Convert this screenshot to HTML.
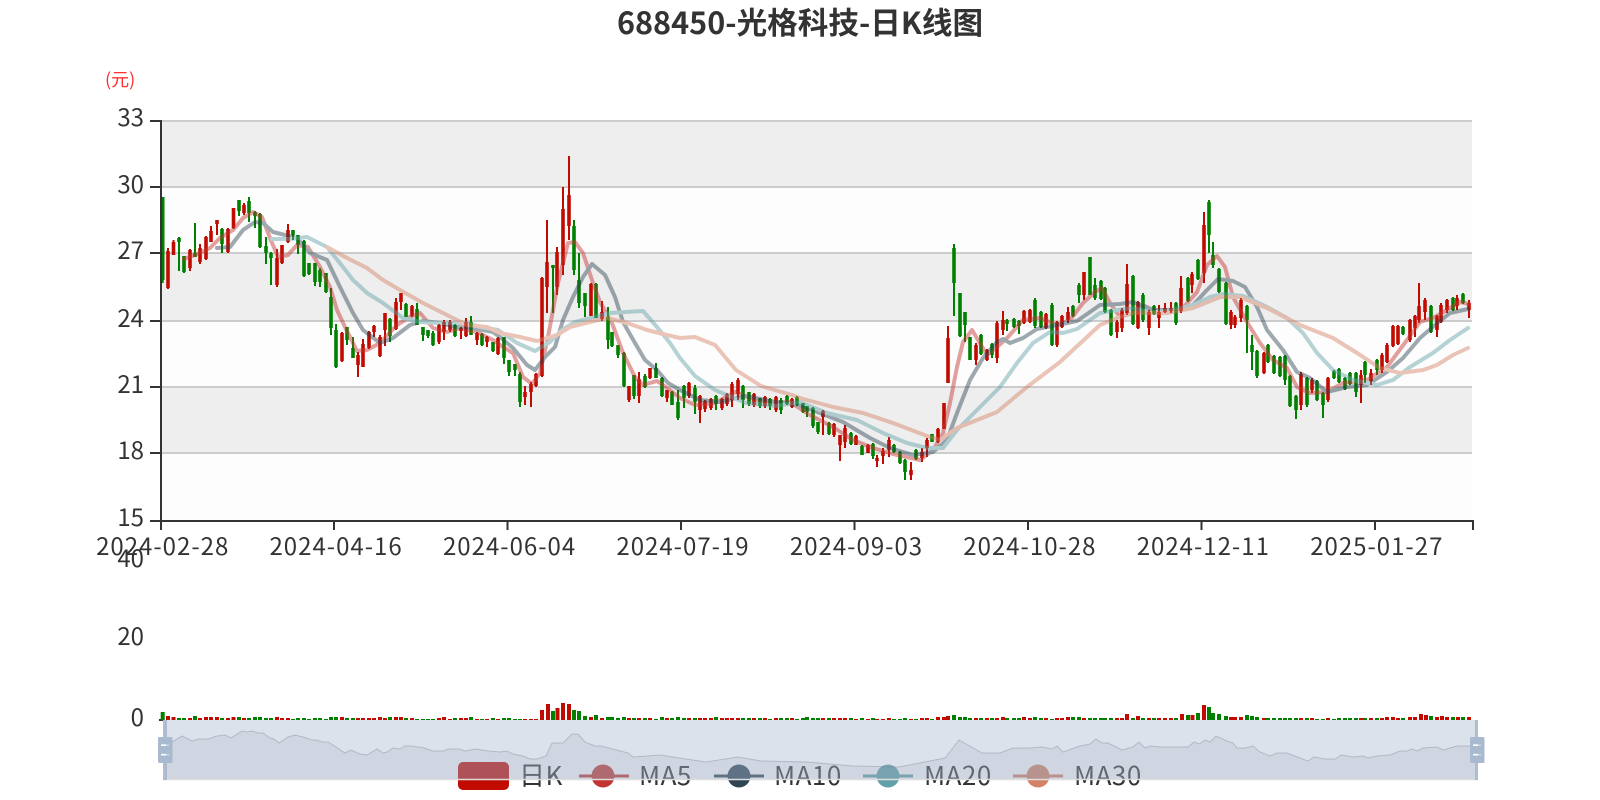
<!DOCTYPE html>
<html lang="zh">
<head>
<meta charset="utf-8">
<title>688450-光格科技-日K线图</title>
<style>
html,body{margin:0;padding:0;background:#fff;width:1600px;height:800px;overflow:hidden}
svg{display:block}
text{font-family:"Noto Sans CJK SC","Liberation Sans",sans-serif;fill:#333;font-size:24px}
.r{text-anchor:end}
.c{text-anchor:middle}
.d{letter-spacing:1px}
.l{font-size:26px;letter-spacing:.5px}
path{fill:none}
</style>
</head>
<body>
<svg width="1600" height="800" viewBox="0 0 1600 800" xmlns="http://www.w3.org/2000/svg">
<rect width="1600" height="800" fill="#fff"/>
<text x="800" y="34" class="c" style="font-size:30.6px;font-weight:700">688450-光格科技-日K线图</text>
<text x="105" y="86" style="font-size:18px;fill:#ff3030">(元)</text>

<!-- bands -->
<rect x="160" y="120" width="1312" height="66.67" fill="#eee"/>
<rect x="160" y="186.67" width="1312" height="66.67" fill="#fdfdfd"/>
<rect x="160" y="253.33" width="1312" height="66.67" fill="#eee"/>
<rect x="160" y="320" width="1312" height="66.67" fill="#fdfdfd"/>
<rect x="160" y="386.67" width="1312" height="66.67" fill="#eee"/>
<rect x="160" y="453.33" width="1312" height="66.67" fill="#fdfdfd"/>
<path d="M160 121H1472M160 187H1472M160 253H1472M160 321H1472M160 387H1472M160 453H1472" stroke="#ccc" stroke-width="2"/>

<!-- green wicks -->
<path stroke="#008000" stroke-width="2" d="M162.7 197V283M179 237V271M184 256V273M195 223V257M222 228V253M239 200V216M249 197V222M255 211V228M260 213V248M266 237V264M271 252V285M293 230V240M298 235V254M304 240V277M309 263V275M315 263V286M320 268V287M326 273V293M331 288V335M336 324V368M347 327V345M353 337V358M390 318V342M406 303V317M417 303V325M423 327V341M428 330V338M433 331V346M455 324V337M471 316V335M482 333V346M493 342V352M504 337V364M509 360V376M515 364V376M520 372V407M553 265V313M574 220V275M579 253V308M585 293V317M596 283V318M608 307V349M612 332V347M618 345V358M624 352V387M634 375V399M645 374V388M656 363V378M662 377V397M672 391V405M678 390V420M684 385V408M695 385V414M716 395V410M743 385V408M749 392V406M760 398V408M770 398V410M781 398V414M787 395V405M797 396V406M803 403V413M807 406V417M813 407V428M818 422V434M829 422V435M851 432V445M862 445V455M873 443V459M894 444V453M900 451V464M905 459V480M916 449V460M932 434V442M954 244V316M960 293V337M965 312V342M970 337V360M981 334V355M992 343V358M1007 319V331M1014 318V328M1019 320V334M1035 298V328M1041 311V328M1052 303V346M1073 305V317M1079 283V303M1090 257V295M1095 278V300M1101 280V300M1105 287V313M1111 309V336M1133 275V325M1143 293V322M1154 305V315M1176 302V325M1188 277V302M1198 259V280M1209 200V253M1213 242V268M1219 268V293M1226 282V325M1247 305V353M1252 335V370M1257 350V378M1268 344V363M1274 355V374M1280 356V377M1285 355V385M1290 375V407M1296 395V419M1307 377V407M1317 380V401M1323 392V418M1334 370V379M1339 368V383M1345 377V390M1350 372V385M1356 372V397M1365 361V383M1377 359V375M1403 326V335M1431 305V333M1453 297V311M1463 293V304"/>
<!-- green bodies -->
<path stroke="#008000" stroke-width="3.6" d="M162.7 197V280M179 238V242M184 256V272M195 253V257M222 229V244M239 200V211M249 201V213M255 212V216M260 214V247M266 246V253M271 253V258M293 230V235M298 235V245M304 241V276M309 263V274M315 263V282M320 270V282M326 273V292M331 297V328M336 330V367M347 327V340M353 348V358M390 319V336M406 304V317M417 309V325M423 327V335M428 330V336M433 333V345M455 325V336M471 322V335M482 334V345M493 342V351M504 337V358M509 360V372M515 364V370M520 374V402M553 265V268M574 226V270M579 280V303M585 293V306M596 284V318M608 317V340M612 332V346M618 345V355M624 353V386M634 375V396M645 376V387M656 368V378M662 378V396M672 392V405M678 402V418M684 386V398M695 388V402M716 396V404M743 386V400M749 392V404M760 398V406M770 399V406M781 400V410M787 396V404M797 397V405M803 403V412M807 406V412M813 408V426M818 422V432M829 423V434M851 433V444M862 446V455M873 444V456M894 445V452M900 452V463M905 460V472M916 450V459M932 434V442M954 248V283M960 293V336M965 312V325M970 337V360M981 335V354M992 344V355M1007 320V324M1014 319V327M1019 321V326M1035 300V326M1041 312V327M1052 305V345M1073 306V316M1079 285V295M1090 257V295M1095 285V298M1101 281V299M1105 288V312M1111 310V335M1133 276V324M1143 295V320M1154 306V314M1176 303V323M1188 278V301M1198 260V279M1209 202V235M1213 255V265M1219 269V292M1226 283V324M1247 306V320M1252 345V352M1257 351V376M1268 345V362M1274 356V373M1280 357V376M1285 356V380M1290 376V406M1296 396V410M1307 378V405M1317 381V400M1323 393V405M1334 371V378M1339 369V382M1345 378V389M1350 373V384M1356 373V392M1365 362V375M1377 360V370M1403 327V334M1431 306V332M1453 298V310M1463 294V303"/>
<!-- red wicks -->
<path stroke="#c10b00" stroke-width="2" d="M168 248V289M173.5 240V255M190 249V271M200 244V264M206 236V260M211 226V242M217 220V235M228 228V253M233.5 208V229M244 203V215M277 249V287M282 245V264M288 224V243M342 332V362M358 352V377M363 339V367M369 331V349M374 325V337M380 335V357M385 313V346M396 298V330M401 293V310M412 305V317M439 324V344M444 320V340M450 320V332M461 327V339M466 318V337M477 332V345M487 336V347M498 337V355M525 386V405M531 382V407M536 373V387M542 277V377M547 220V313M557 247V295M563 187V275M569 156V240M591 283V316M602 301V321M629 386V402M639 372V403M650 368V379M667 390V402M689 382V398M700 395V423M705 400V412M711 398V410M722 398V410M727 393V406M732 382V407M738 378V400M754 393V407M765 396V408M776 396V412M792 398V408M823 410V435M834 423V437M840 435V461M845 425V448M856 435V445M868 444V453M877 455V467M883 448V464M889 437V457M911 462V480M922 448V462M927 438V457M938 428V443M944 403V429M948 326V383M976 343V365M987 349V361M997 321V363M1003 311V335M1024 310V324M1030 309V323M1046 313V329M1057 321V347M1062 315V328M1068 307V323M1084 272V300M1117 320V338M1122 308V332M1127 264V315M1138 301V329M1149 310V335M1159 305V328M1165 303V313M1171 302V313M1181 276V313M1192 272V293M1204 212V283M1231 310V329M1235 315V328M1241 298V322M1264 352V374M1301 372V410M1312 378V393M1328 377V402M1361 370V403M1371 369V385M1382 353V373M1387 343V363M1393 325V347M1398 325V345M1410 319V342M1415 315V337M1419 283V323M1425 298V320M1437 315V337M1441 303V323M1447 299V313M1457 295V310M1469 300V318"/>
<!-- red bodies -->
<path stroke="#c10b00" stroke-width="3.6" d="M168 251V288M173.5 242V255M190 250V268M200 248V262M206 237V259M211 231V242M217 220V224M228 229V252M233.5 208V228M244 205V213M277 258V285M282 245V263M288 230V242M342 333V361M358 355V365M363 344V367M369 332V348M374 326V332M380 337V356M385 313V330M396 302V329M401 293V302M412 306V316M439 325V342M444 322V332M450 322V330M461 328V331M466 322V336M477 333V340M487 337V342M498 338V354M525 392V397M531 384V392M536 374V386M542 278V376M547 262V287M557 252V287M563 209V265M569 195V226M591 284V316M602 312V319M629 386V400M639 379V396M650 368V378M667 390V398M689 383V396M700 396V410M705 401V409M711 399V408M722 399V408M727 394V404M732 384V400M738 380V394M754 394V405M765 397V406M776 397V410M792 399V407M823 411V417M834 424V435M840 435V445M845 428V442M856 436V445M868 445V453M877 458V461M883 451V456M889 440V450M911 470V475M922 452V458M927 440V448M938 429V442M944 403V429M948 338V383M976 345V360M987 350V360M997 323V358M1003 320V330M1024 311V323M1030 310V322M1046 314V328M1057 322V345M1062 316V327M1068 312V320M1084 272V295M1117 322V332M1122 310V328M1127 284V313M1138 302V328M1149 312V328M1159 312V318M1165 308V312M1171 308V311M1181 288V311M1192 274V285M1204 225V273M1231 312V325M1235 317V325M1241 300V318M1264 353V373M1301 374V405M1312 380V390M1328 378V400M1361 375V385M1371 373V381M1382 355V370M1387 345V362M1393 326V346M1398 326V344M1410 320V340M1415 316V328M1419 306V320M1425 300V312M1437 316V330M1441 305V322M1447 300V310M1457 298V306M1469 303V310"/>

<!-- MA lines -->
<g stroke-width="4" stroke-linejoin="round" stroke-linecap="round" opacity=".46">
<path stroke="#c23531" d="M184 259L195 255L210 248L220 238L233 230L243 218L253 212L262 217L270 238L278 257L288 255L297 245L308 247L320 267L330 287L337 310L345 327L357 351L367 350L380 343L397 325L410 317L420 313L433 328L447 332L460 328L477 332L493 340L503 347L513 353L523 377L532 384L540 373L548 337L558 283L568 243L575 242L583 253L592 280L600 302L612 323L623 353L635 377L643 385L657 381L670 390L680 398L695 405L715 403L735 392L750 398L770 403L790 402L810 415L833 427L853 440L873 448L893 454L920 460L933 450L943 433L950 403L957 367L963 342L972 330L978 340L987 355L997 347L1008 337L1023 320L1040 318L1057 325L1070 320L1083 303L1095 292L1102 288L1110 303L1120 317L1133 313L1143 305L1157 312L1170 310L1183 308L1197 292L1207 265L1217 256L1225 267L1233 297L1247 322L1260 343L1273 360L1287 368L1297 387L1310 393L1327 392L1343 383L1367 380L1387 367L1407 340L1420 322L1433 318L1447 310L1460 302L1469 304"/>
<path stroke="#2f4554" d="M217 248L230 247L243 230L255 222L263 223L273 232L297 238L310 253L327 260L340 287L353 313L363 330L380 343L393 338L410 325L423 321L440 323L457 327L473 328L493 332L500 337L513 348L527 365L535 370L545 357L555 347L563 320L573 297L583 277L592 264L605 275L615 297L623 322L635 343L645 360L657 370L668 383L680 390L700 400L720 402L745 396L770 401L790 404L800 405L820 413L843 422L870 438L890 448L913 455L933 452L947 440L957 413L970 380L983 358L997 342L1003 339L1010 343L1023 338L1037 329L1057 325L1077 321L1090 312L1100 305L1120 304L1133 302L1153 310L1173 310L1193 305L1207 290L1218 279L1233 281L1245 287L1257 307L1267 330L1283 350L1297 372L1310 378L1327 392L1347 387L1367 385L1387 372L1403 358L1420 338L1435 325L1450 313L1468 309"/>
<path stroke="#61a0a8" d="M272 239L290 239L307 237L327 247L343 267L353 280L367 293L383 303L403 318L420 322L440 323L467 323L480 327L498 330L517 343L535 351L550 342L562 330L575 322L590 318L610 313L643 311L657 327L670 343L680 358L695 376L715 390L746 403L776 406L800 402L827 413L857 420L883 433L907 443L927 448L943 448L957 430L977 410L1000 387L1017 363L1033 343L1050 332L1063 333L1077 329L1100 313L1117 310L1133 308L1150 313L1173 310L1193 305L1210 297L1223 294L1243 296L1267 307L1287 318L1303 333L1317 353L1333 370L1353 380L1377 385L1393 380L1410 367L1433 353L1450 340L1468 328"/>
<path stroke="#d48265" d="M327 247L347 258L367 268L383 280L400 290L423 303L447 315L467 325L487 327L500 333L520 337L537 341L557 335L570 327L590 322L607 318L627 323L647 330L667 335L680 338L695 337L715 345L736 370L761 386L792 395L800 398L833 407L863 413L893 423L927 436L940 440L957 428L997 412L1027 387L1060 362L1100 325L1117 318L1133 313L1167 313L1193 308L1220 297L1240 297L1267 308L1300 325L1333 338L1357 353L1380 368L1400 373L1423 370L1437 365L1453 355L1468 348"/>
</g>

<!-- axes -->
<path stroke="#333" stroke-width="2" d="M161 120V522M150 121H161M150 187H161M150 253H161M150 321H161M150 387H161M150 453H161M150 521H161M160 521H1474M161 521V530M334 521V530M507.5 521V530M681 521V530M854.5 521V530M1028 521V530M1201.5 521V530M1375 521V530M1473 521V530M159 720H163"/>
<g>
<text x="144" y="126" class="r">33</text>
<text x="144" y="193" class="r">30</text>
<text x="144" y="259" class="r">27</text>
<text x="144" y="327" class="r">24</text>
<text x="144" y="393" class="r">21</text>
<text x="144" y="459" class="r">18</text>
<text x="144" y="526" class="r">15</text>
<text x="162.7" y="555" class="c d">2024-02-28</text>
<text x="336.1" y="555" class="c d">2024-04-16</text>
<text x="509.6" y="555" class="c d">2024-06-04</text>
<text x="683" y="555" class="c d">2024-07-19</text>
<text x="856.5" y="555" class="c d">2024-09-03</text>
<text x="1029.9" y="555" class="c d">2024-10-28</text>
<text x="1203.3" y="555" class="c d">2024-12-11</text>
<text x="1376.8" y="555" class="c d">2025-01-27</text>
<text x="144" y="567" class="r">40</text>
<text x="144" y="645" class="r">20</text>
<text x="144" y="726" class="r">0</text>
</g>

<!-- volume -->
<path stroke="#008000" stroke-width="4" d="M162.7 720v-8M179 720v-2M184 720v-2M195 720v-4M222 720v-2M239 720v-3M249 720v-2M255 720v-3M260 720v-3M266 720v-2M271 720v-2M293 720v-1M298 720v-2M304 720v-2M309 720v-1M315 720v-2M320 720v-2M326 720v-1M331 720v-3M336 720v-3M347 720v-2M353 720v-2M390 720v-3M406 720v-2M417 720v-1M423 720v-1M428 720v-1M433 720v-1M455 720v-2M471 720v-3M482 720v-1M493 720v-2M504 720v-2M509 720v-2M515 720v-1M520 720v-1M553 720v-9M574 720v-10M579 720v-9M585 720v-4M596 720v-5M608 720v-3M612 720v-3M618 720v-2M624 720v-3M634 720v-2M645 720v-2M656 720v-1M662 720v-3M672 720v-2M678 720v-3M684 720v-2M695 720v-2M716 720v-3M743 720v-2M749 720v-2M760 720v-2M770 720v-1M781 720v-2M787 720v-2M797 720v-1M803 720v-2M807 720v-3M813 720v-2M818 720v-2M829 720v-2M851 720v-2M862 720v-2M873 720v-2M894 720v-1M900 720v-1M905 720v-2M916 720v-1M932 720v-1M954 720v-5M960 720v-3M965 720v-3M970 720v-2M981 720v-2M992 720v-2M1007 720v-2M1014 720v-2M1019 720v-2M1035 720v-3M1041 720v-2M1052 720v-1M1073 720v-3M1079 720v-3M1090 720v-2M1095 720v-2M1101 720v-2M1105 720v-2M1111 720v-2M1133 720v-2M1143 720v-2M1154 720v-2M1176 720v-2M1188 720v-5M1198 720v-7M1209 720v-13M1213 720v-7M1219 720v-6M1226 720v-4M1247 720v-5M1252 720v-4M1257 720v-3M1268 720v-2M1274 720v-2M1280 720v-2M1285 720v-2M1290 720v-2M1296 720v-2M1307 720v-2M1317 720v-1M1323 720v-1M1334 720v-1M1339 720v-2M1345 720v-2M1350 720v-2M1356 720v-2M1365 720v-2M1377 720v-2M1403 720v-2M1431 720v-4M1453 720v-3M1463 720v-3"/>
<path stroke="#c10b00" stroke-width="4" d="M168 720v-4M173.5 720v-3M190 720v-2M200 720v-2M206 720v-3M211 720v-3M217 720v-3M228 720v-2M233.5 720v-3M244 720v-2M277 720v-3M282 720v-2M288 720v-2M342 720v-3M358 720v-2M363 720v-2M369 720v-2M374 720v-2M380 720v-3M385 720v-2M396 720v-3M401 720v-3M412 720v-2M439 720v-2M444 720v-3M450 720v-1M461 720v-2M466 720v-2M477 720v-1M487 720v-1M498 720v-1M525 720v-1M531 720v-1M536 720v-1M542 720v-10M548 720v-16M557.5 720v-12M563 720v-17M569 720v-16M591 720v-3M602 720v-2M629 720v-2M639 720v-2M650 720v-2M667 720v-2M689 720v-2M700 720v-2M705 720v-2M711 720v-2M722 720v-2M727 720v-2M732 720v-2M738 720v-2M754 720v-2M765 720v-2M776 720v-2M792 720v-2M823 720v-2M834 720v-2M840 720v-2M845 720v-2M856 720v-1M868 720v-1M877 720v-1M883 720v-1M889 720v-2M911 720v-1M922 720v-2M927 720v-2M938 720v-3M944 720v-3M948 720v-4M976 720v-2M987 720v-2M997 720v-2M1003 720v-3M1024 720v-3M1030 720v-2M1046 720v-2M1057 720v-2M1062 720v-2M1068 720v-3M1084 720v-2M1117 720v-2M1122 720v-2M1127 720v-6M1138 720v-4M1149 720v-2M1159 720v-2M1165 720v-2M1171 720v-2M1182 720v-6M1192.5 720v-5M1204 720v-15M1231 720v-3M1235 720v-3M1241 720v-3M1264 720v-2M1301 720v-2M1312 720v-2M1328 720v-2M1361 720v-2M1371 720v-2M1382 720v-2M1387 720v-3M1393 720v-3M1398 720v-2M1410 720v-3M1415 720v-3M1421 720v-6M1426 720v-5M1437 720v-3M1442 720v-4M1447 720v-3M1458 720v-3M1469 720v-3"/>

<!-- legend (below slider overlay) -->
<rect x="458" y="762" width="51" height="28" rx="5" fill="#c10b00"/>
<text x="519" y="785" class="l">日K</text>
<path stroke="#c23531" stroke-width="3" d="M579 776H629"/><circle cx="603" cy="776" r="11.5" fill="#c23531"/>
<text x="639" y="785" class="l">MA5</text>
<path stroke="#2f4554" stroke-width="3" d="M714 776H764"/><circle cx="739" cy="776" r="11.5" fill="#2f4554"/>
<text x="774" y="785" class="l">MA10</text>
<path stroke="#61a0a8" stroke-width="3" d="M863 776H913"/><circle cx="888" cy="776" r="11.5" fill="#61a0a8"/>
<text x="924" y="785" class="l">MA20</text>
<path stroke="#d48265" stroke-width="3" d="M1013 776H1063"/><circle cx="1038" cy="776" r="11.5" fill="#d48265"/>
<text x="1074" y="785" class="l">MA30</text>

<!-- data zoom -->
<polygon fill="#2f4554" fill-opacity=".1" points="165,780 165,745 172,742 182,736 192,741 198,739 208,739 217,736 225,735 231,738 242,731 247,732 252,731 258,733 263,733 270,738 274,739 279,743 288,737 295,735 303,737 312,740 317,740 322,742 328,742 333,745 345,753 351,750 360,754 367,755 377,749 383,753 387,752 393,748 400,749 405,746 412,746 417,747 421,747 427,749 433,751 443,751 448,749 460,749 465,751 475,749 482,750 488,751 500,752 507,751 513,754 523,756 530,759 537,759 546,756 552,743 563,743 572,734 578,734 585,742 595,746 601,746 628,753 633,757 660,755 679,758 706,762 738,757 761,761 807,762 853,766 899,767 945,758 959,740 968,745 982,753 1000,753 1013,748 1030,748 1042,747 1052,749 1057,746 1063,752 1080,746 1090,744 1096,739 1102,743 1108,743 1122,750 1133,747 1139,742 1145,748 1150,746 1160,747 1188,747 1194,742 1199,744 1205,740 1210,742 1216,736 1227,741 1233,743 1237,748 1245,748 1253,746 1260,752 1270,756 1277,753 1287,753 1297,757 1308,761 1314,757 1325,759 1335,759 1341,755 1353,757 1363,756 1368,758 1377,756 1390,755 1400,751 1407,751 1412,749 1417,751 1423,748 1437,747 1443,750 1450,748 1457,746 1470,746 1476,746 1476,780"/>
<polyline fill="none" stroke="#2f4554" stroke-opacity=".32" stroke-width="1" points="165,745 172,742 182,736 192,741 198,739 208,739 217,736 225,735 231,738 242,731 247,732 252,731 258,733 263,733 270,738 274,739 279,743 288,737 295,735 303,737 312,740 317,740 322,742 328,742 333,745 345,753 351,750 360,754 367,755 377,749 383,753 387,752 393,748 400,749 405,746 412,746 417,747 421,747 427,749 433,751 443,751 448,749 460,749 465,751 475,749 482,750 488,751 500,752 507,751 513,754 523,756 530,759 537,759 546,756 552,743 563,743 572,734 578,734 585,742 595,746 601,746 628,753 633,757 660,755 679,758 706,762 738,757 761,761 807,762 853,766 899,767 945,758 959,740 968,745 982,753 1000,753 1013,748 1030,748 1042,747 1052,749 1057,746 1063,752 1080,746 1090,744 1096,739 1102,743 1108,743 1122,750 1133,747 1139,742 1145,748 1150,746 1160,747 1188,747 1194,742 1199,744 1205,740 1210,742 1216,736 1227,741 1233,743 1237,748 1245,748 1253,746 1260,752 1270,756 1277,753 1287,753 1297,757 1308,761 1314,757 1325,759 1335,759 1341,755 1353,757 1363,756 1368,758 1377,756 1390,755 1400,751 1407,751 1412,749 1417,751 1423,748 1437,747 1443,750 1450,748 1457,746 1470,746 1476,746"/>
<rect x="165" y="720" width="1311" height="60" fill="#a7b7cc" fill-opacity=".4"/>
<path stroke="#ddd" stroke-width="1.5" d="M163 779.5H1478"/>
<rect x="163" y="720" width="4" height="60" fill="#a7b7cc" fill-opacity=".9"/>
<rect x="1475" y="720" width="3" height="60" fill="#a7b7cc" fill-opacity=".9"/>
<rect x="158" y="737" width="14.5" height="26" rx="1.5" fill="#a9b9d0"/>
<rect x="1470" y="737" width="14.5" height="26" rx="1.5" fill="#a9b9d0"/>
<path stroke="#fff" stroke-width="1.6" d="M161 745.2H166M161 754.7H166M1473 745.2H1478M1473 754.7H1478"/>
<path stroke="#fff" stroke-opacity=".4" stroke-width="1.6" d="M166 745.2H169M166 754.7H169M1478 745.2H1481M1478 754.7H1481"/>
</svg>
</body>
</html>
